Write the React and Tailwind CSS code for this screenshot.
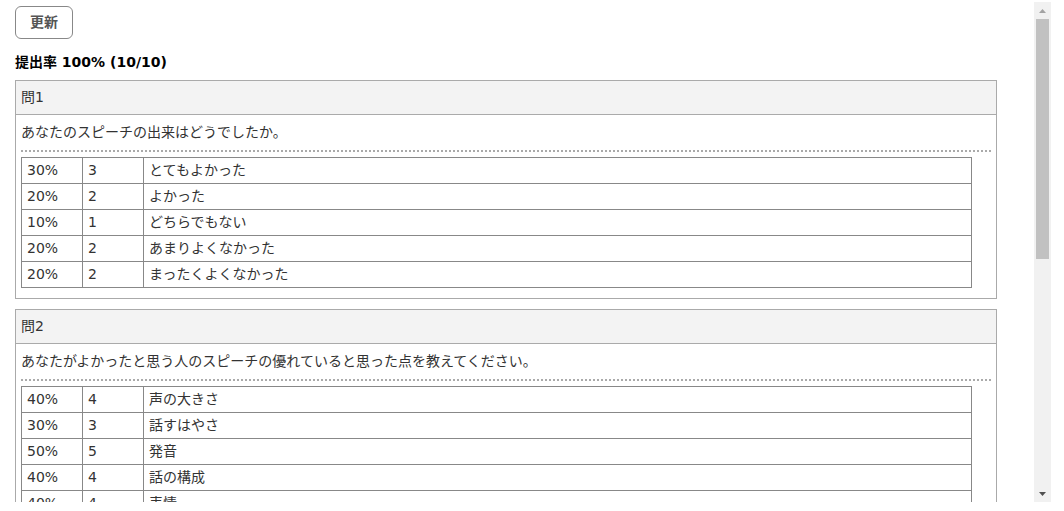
import React from 'react';

const questions = [
    {
        no: 1,
        text: 'あなたのスピーチの出来はどうでしたか。',
        rows: [
            ['30%', 3, 'とてもよかった'],
            ['20%', 2, 'よかった'],
            ['10%', 1, 'どちらでもない'],
            ['20%', 2, 'あまりよくなかった'],
            ['20%', 2, 'まったくよくなかった'],
        ],
    },
    {
        no: 2,
        text: 'あなたがよかったと思う人のスピーチの優れていると思った点を教えてください。',
        rows: [
            ['40%', 4, '声の大きさ'],
            ['30%', 3, '話すはやさ'],
            ['50%', 5, '発音'],
            ['40%', 4, '話の構成'],
            ['40%', 4, '表情'],
            ['30%', 3, 'ジェスチャー'],
            ['20%', 2, 'アイコンタクト'],
        ],
    },
    {
        no: 3,
        text: '次のスピーチで気をつけたいことは何ですか。',
        rows: [
            ['60%', 6, '声の大きさ'],
            ['20%', 2, '話すはやさ'],
            ['20%', 2, '発音'],
        ],
    },
];

function Question({ q }) {
    return (
        <div className="w-[982px] border border-[#aaaaaa] mb-[10px]">
            <div className="bg-[#f3f3f3] border-b border-[#aaaaaa] px-[5px] py-[5px] leading-[23px]">問{q.no}</div>
            <div className="px-[5px] pt-[5px] pb-[10px]">
                <div className="leading-[24px] pb-[6px] mb-[5px] border-b-2 border-dotted border-[#aaaaaa]">{q.text}</div>
                <table className="w-[951px] table-fixed border-collapse">
                    <tbody>
                        {q.rows.map((r, i) => (
                            <tr key={i}>
                                <td className="w-[61px] border border-[#888888] px-[5px] leading-[25px]">{r[0]}</td>
                                <td className="w-[61px] border border-[#888888] px-[5px] leading-[25px]">{r[1]}</td>
                                <td className="border border-[#888888] px-[5px] leading-[25px]">{r[2]}</td>
                            </tr>
                        ))}
                    </tbody>
                </table>
            </div>
        </div>
    );
}

export default function App() {
    return (
        <div className="w-[1064px] h-[511px] bg-white pt-[2px] text-[14px] text-[#333333] font-['DejaVu_Sans','Noto_Sans_CJK_JP',sans-serif]">
            <div className="flex w-[1051px] h-[500px]">
                <div className="flex-1 overflow-hidden pl-[15px] pt-[4px]">
                    <button className="border border-[#888888] rounded-[6px] px-[14px] py-[4px] leading-[23px] text-[#555555] font-semibold bg-white">
                        更新
                    </button>
                    <div className="mt-[11px] mb-[6px] leading-[24px] font-bold text-black">提出率 100% (10/10)</div>
                    {questions.map((q) => (
                        <Question key={q.no} q={q} />
                    ))}
                </div>

                {/* scrollbar */}
                <div className="w-[17px] bg-[#f1f1f1] flex flex-col">
                    <div className="h-[17px] flex items-center justify-center">
                        <svg width="7" height="4" viewBox="0 0 7 4"><path d="M3.5 0 L7 4 L0 4 Z" fill="#a3a3a3" /></svg>
                    </div>
                    <div className="mx-[2px] h-[240px] bg-[#c1c1c1]" />
                    <div className="flex-1" />
                    <div className="h-[17px] flex items-center justify-center">
                        <svg width="7" height="4" viewBox="0 0 7 4"><path d="M0 0 L7 0 L3.5 4 Z" fill="#505050" /></svg>
                    </div>
                </div>
            </div>
        </div>
    );
}
